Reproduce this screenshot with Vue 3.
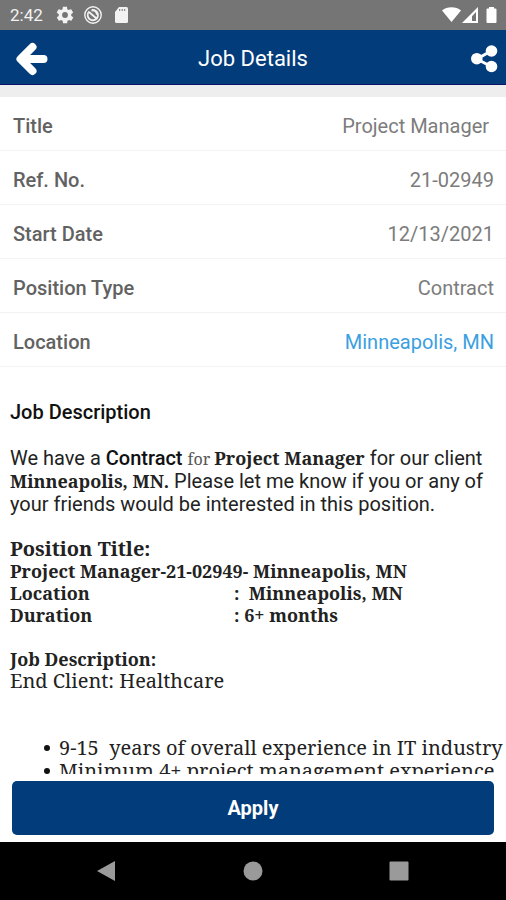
<script setup>
const details = [
  { label: 'Title', value: 'Project Manager ' },
  { label: 'Ref. No.', value: '21-02949' },
  { label: 'Start Date', value: '12/13/2021' },
  { label: 'Position Type', value: 'Contract' },
  { label: 'Location', value: 'Minneapolis, MN', href: '#map' },
]

const requirements = [
  '9-15  years of overall experience in IT industry',
  'Minimum 4+ project management experience',
]
</script>

<template>
  <div class="screen">
    <div class="status">
      <span class="time">2:42</span>
      <svg class="status-icon" viewBox="0 0 24 24" aria-hidden="true">
        <path d="M19.4 13c.1-.3.1-.6.1-1s0-.7-.1-1l2.1-1.600c.2-.2.3-.4.1-.7l-2-3.400c-.1-.2-.4-.3-.6-.2l-2.500 1c-.5-.4-1.100-.7-1.700-1l-.4-2.600c0-.3-.2-.5-.5-.5h-4c-.3 0-.5.2-.5.5l-.4 2.600c-.6.3-1.200.6-1.700 1l-2.500-1c-.2-.1-.5 0-.6.2l-2 3.400c-.1.2-.1.5.1.7L4.600 11c-.1.300-.1.700-.1 1s0 .7.1 1l-2.100 1.600c-.2.2-.3.4-.1.7l2 3.400c.1.2.4.3.6.2l2.500-1c.5.4 1.100.7 1.700 1l.4 2.600c0 .3.2.5.5.5h4c.3 0 .5-.2.5-.5l.4-2.600c.6-.3 1.200-.6 1.700-1l2.500 1c.2.1.5 0 .6-.2l2-3.400c.1-.2.1-.5-.1-.7zM12 15.500a3.500 3.500 0 1 1 0-7 3.500 3.500 0 0 1 0 7z" />
      </svg>
      <svg class="status-icon" viewBox="0 0 20 20" aria-hidden="true">
        <g fill="none" stroke="currentColor">
          <circle cx="10" cy="10" r="8.200" stroke-width="1.400" />
          <path d="M6 6.500a5.200 5.200 0 1 0 3-1.600M6 7l7.500 6.500M8.500 5.500c3-.5 5 1.500 5.500 4" stroke-width="1.800" />
        </g>
      </svg>
      <svg class="status-icon" viewBox="0 0 20 20" aria-hidden="true">
        <path d="M8 2h7.500A1.500 1.500 0 0 1 17 3.500v13a1.500 1.500 0 0 1-1.500 1.500h-10A1.500 1.500 0 0 1 4 16.500V7z" />
        <path class="slots" d="M8.700 4v2M11.200 4v2M13.700 4v2" />
      </svg>
      <svg class="signals" viewBox="0 0 56 18" aria-hidden="true">
        <path d="M0 4.500C5 .3 14 .3 19 4.500L9.500 16z" />
        <path d="M36 1v16H20zM34 6l-4 4.200V15h4z" fill-rule="evenodd" />
        <path d="M47 1h5v1.500h1.500a1 1 0 0 1 1 1V16a1 1 0 0 1-1 1h-8a1 1 0 0 1-1-1V3.500a1 1 0 0 1 1-1H47z" />
      </svg>
    </div>

    <header class="bar">
      <button class="icon-button" type="button" aria-label="Back">
        <svg class="back" viewBox="0 0 32 34" aria-hidden="true">
          <path d="M16.500 5 4.500 17l12 12M5 17h22.500" />
        </svg>
      </button>
      <h1>Job Details</h1>
      <button class="icon-button" type="button" aria-label="Share">
        <svg class="share" viewBox="0 0 28 28" aria-hidden="true">
          <path d="M21 6 7 14l14 7.500" />
          <circle cx="21.500" cy="6" r="5.800" />
          <circle cx="6.800" cy="13.700" r="5.800" />
          <circle cx="21.500" cy="21.500" r="5.800" />
        </svg>
      </button>
    </header>

    <dl class="details">
      <div v-for="item in details" :key="item.label" class="row">
        <dt>{{ item.label }}</dt>
        <dd>
          <a v-if="item.href" :href="item.href">{{ item.value }}</a>
          <template v-else>{{ item.value }}</template>
        </dd>
      </div>
    </dl>

    <main class="description">
      <h2>Job Description</h2>
      <p class="intro">
        We have a <b>Contract</b> <span class="serif light">for </span> <strong class="serif">Project Manager</strong> for our client
        <strong class="serif">Minneapolis, MN.</strong> Please let me know if you or any of your
        friends would be interested in this position.
      </p>
      <section class="block strong">
        <h3 class="large">Position Title:</h3>
        <p>Project Manager-21-02949- Minneapolis, MN</p>
        <dl class="facts">
          <dt>Location</dt>
          <dd>:&nbsp; Minneapolis, MN</dd>
          <dt>Duration</dt>
          <dd>: 6+ months</dd>
        </dl>
      </section>
      <section class="block">
        <h3>Job Description:</h3>
        <p class="large">End Client: Healthcare</p>
      </section>
      <ul class="requirements">
        <li v-for="line in requirements" :key="line">{{ line }}</li>
      </ul>
    </main>

    <div class="action">
      <button class="apply" type="button">Apply</button>
    </div>

    <nav class="system" aria-label="System">
      <button type="button" aria-label="System back">
        <svg viewBox="0 0 22 22" aria-hidden="true"><path d="M19 1v20L1 11z" /></svg>
      </button>
      <button type="button" aria-label="Home">
        <svg viewBox="0 0 22 22" aria-hidden="true"><circle cx="11" cy="11" r="9.500" /></svg>
      </button>
      <button type="button" aria-label="Recent apps">
        <svg viewBox="0 0 22 22" aria-hidden="true"><rect x="1.500" y="1.500" width="19" height="19" rx="1" /></svg>
      </button>
    </nav>
  </div>
</template>

<style>
body {
  margin: 0;
  background: #fff;
}
</style>

<style scoped>
.screen {
  display: flex;
  flex-direction: column;
  height: 100vh;
  font-family: Roboto, "Liberation Sans", sans-serif;
  font-size: 20px;
  color: #222;
}

h1, h2, h3, p, dl, dd, ul {
  margin: 0;
  padding: 0;
}

button {
  border: 0;
  padding: 0;
  font: inherit;
  color: inherit;
  background: none;
}

svg {
  display: block;
  fill: currentColor;
}

.status {
  display: flex;
  align-items: center;
  flex: none;
  gap: 8px;
  height: 30px;
  padding: 0 8px 0 10px;
  background: #757575;
  color: #f2f2f2;
}

.time {
  margin-right: 4px;
  font-size: 17px;
}

.status-icon {
  width: 20px;
  height: 20px;
}

.slots {
  stroke: #757575;
}

.signals {
  width: 56px;
  height: 18px;
  margin-left: auto;
  color: #fff;
}

.bar {
  display: flex;
  align-items: center;
  justify-content: space-between;
  flex: none;
  box-sizing: border-box;
  height: 55px;
  padding: 3px 8px 0;
  border-bottom: 1px solid #0a1468;
  background: #023c7a;
  color: #fff;
}

h1 {
  font-size: 22px;
  font-weight: 400;
}

.icon-button {
  width: 40px;
}

.back {
  width: 32px;
  height: 34px;
  margin-left: auto;
  fill: none;
  stroke: currentColor;
  stroke-width: 8;
  stroke-linecap: round;
  stroke-linejoin: round;
}

.share {
  width: 28px;
  height: 28px;
  margin-left: auto;
}

.share path {
  fill: none;
  stroke: currentColor;
  stroke-width: 3;
}

.details {
  flex: none;
  border-top: 12px solid #eee;
}

.row {
  display: flex;
  align-items: center;
  justify-content: space-between;
  box-sizing: border-box;
  height: 54px;
  padding: 4px 12px 0 13px;
  border-bottom: 1px solid #f3f3f3;
}

.row dt {
  font-weight: 500;
  color: #626262;
}

.row dd {
  white-space: pre;
  color: #7c7c7c;
}

.row a {
  color: #3b9fe0;
  text-decoration: none;
}

.description {
  flex: 1;
  min-height: 0;
  padding: 34px 10px 0;
  overflow: auto;
  scrollbar-width: none;
}

h2 {
  font-size: 20px;
  font-weight: 500;
  line-height: 23px;
  color: #111;
}

.intro {
  margin-top: 23px;
  line-height: 23px;
}

.intro b {
  font-weight: 500;
  color: #111;
}

.serif, .block, .requirements {
  font-family: "Noto Serif", "DejaVu Serif", serif;
  font-size: 18px;
}

.serif {
  line-height: 20px;
}

.light {
  font-size: 16px;
  color: #555;
}

.block {
  margin-top: 22px;
  line-height: 22px;
}

h3 {
  font-size: 18px;
}

.strong {
  font-weight: 700;
}

h3.large, .large, .requirements {
  font-size: 20px;
}

.facts {
  display: grid;
  grid-template-columns: 224px 1fr;
}

.requirements {
  margin-top: 44px;
  padding-left: 34px;
  line-height: 23px;
  list-style: none;
  white-space: pre;
}

.requirements li {
  display: flex;
  align-items: center;
  gap: 9px;
}

.requirements li::before {
  flex: none;
  width: 6px;
  height: 6px;
  border-radius: 50%;
  background: #111;
  content: "";
}

.action {
  flex: none;
  padding: 7px 12px;
}

.apply {
  display: block;
  width: 100%;
  height: 54px;
  border-radius: 5px;
  background: #023c7a;
  font-weight: 700;
  color: #fff;
}

.system {
  display: flex;
  justify-content: center;
  align-items: center;
  gap: 124px;
  flex: none;
  height: 58px;
  background: #000;
  color: #9a9a9a;
}

.system svg {
  width: 22px;
  height: 22px;
}
</style>
